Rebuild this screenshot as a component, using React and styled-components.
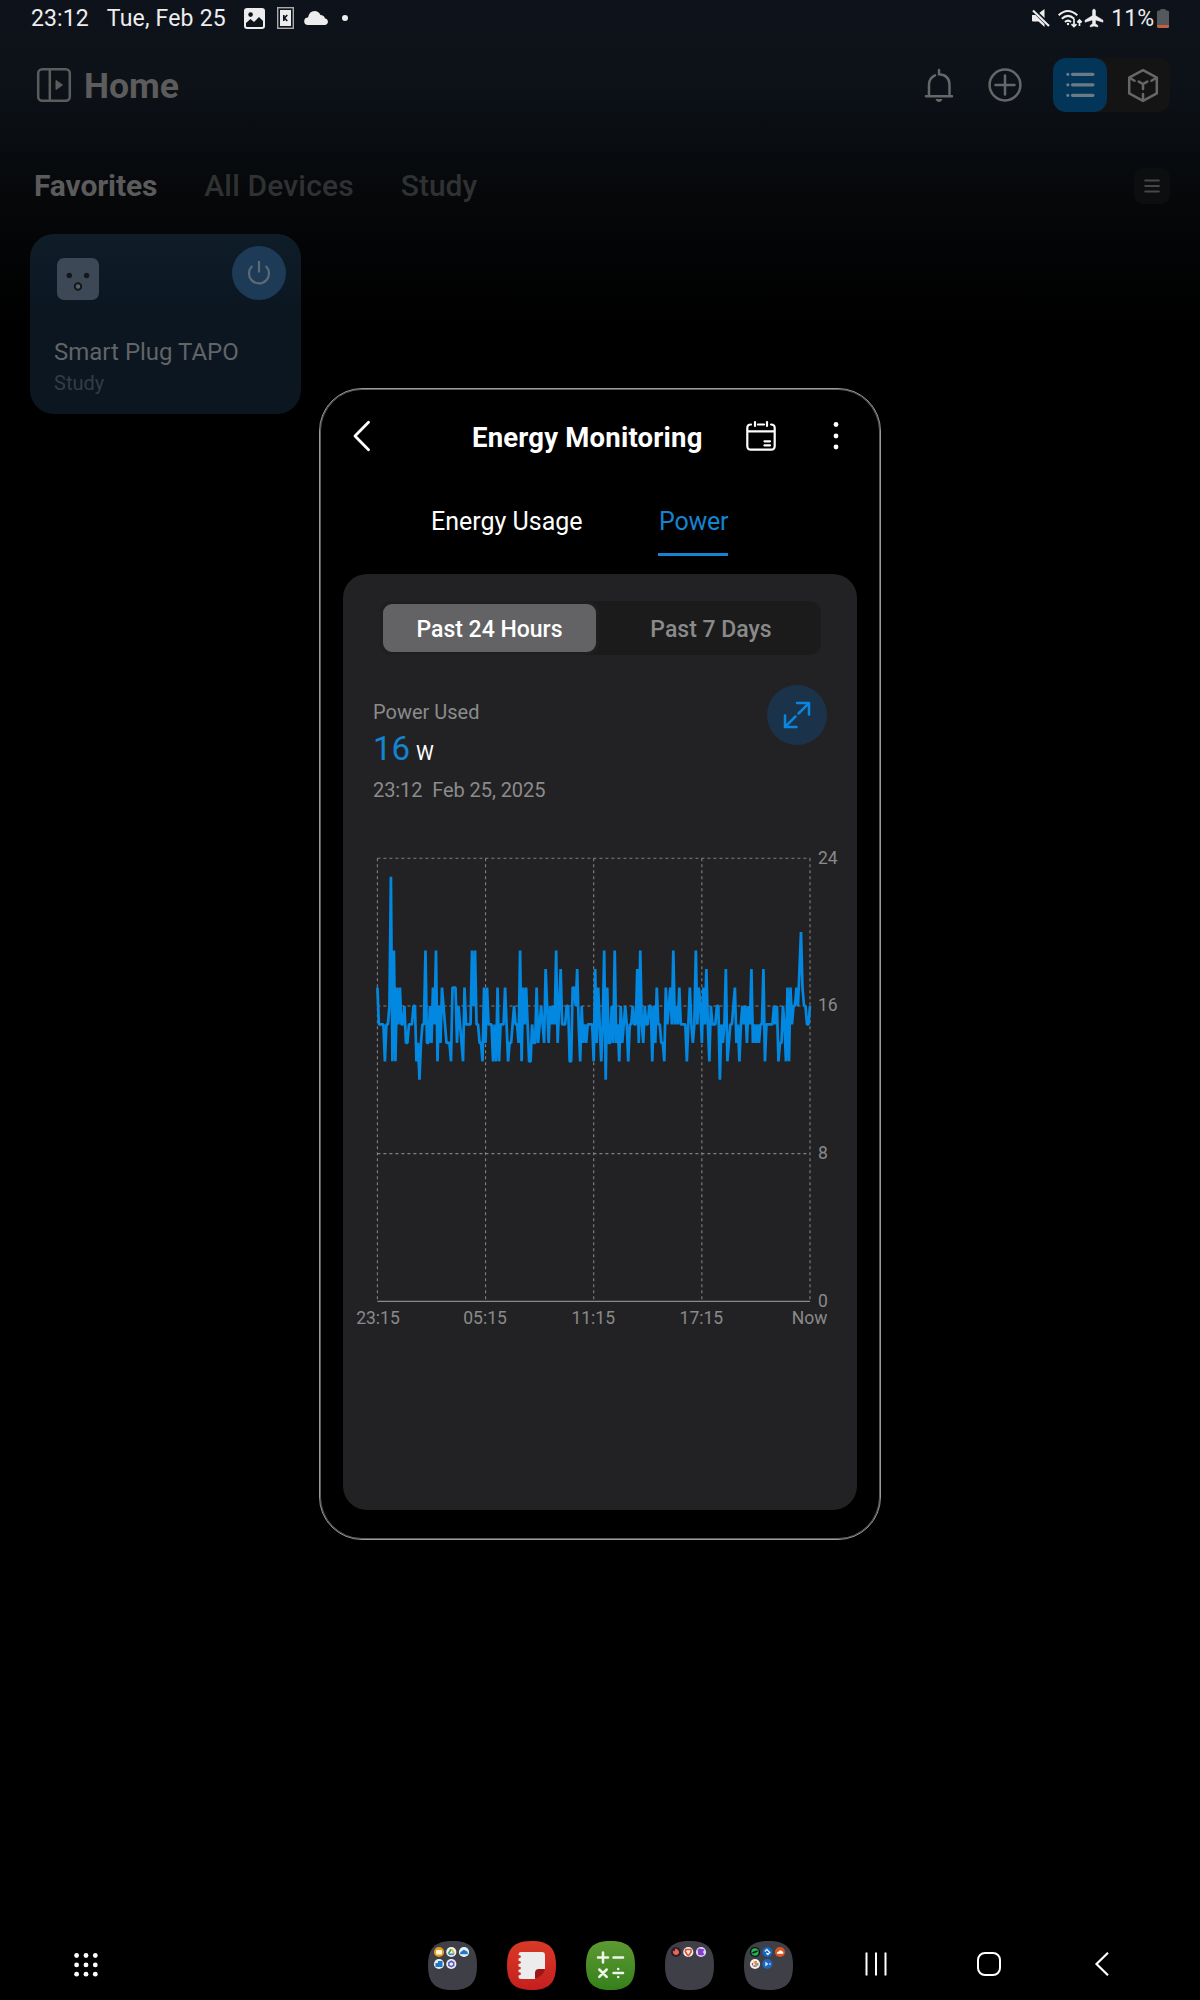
import React from 'react';
import styled, { createGlobalStyle } from 'styled-components';

const Global = createGlobalStyle`
  html, body { margin: 0; padding: 0; background: #000; }
  * { box-sizing: border-box; }
  body { font-family: Roboto, "Noto Sans", sans-serif; }
  svg { display: block; flex: none; overflow: visible; }
  button { font: inherit; border: 0; padding: 0; background: none; color: inherit; }
`;

const Screen = styled.div`
  position: relative;
  display: flex;
  flex-direction: column;
  width: 1200px;
  height: 2000px;
  overflow: hidden;
  white-space: nowrap;
  background: linear-gradient(180deg, #0e131b 0, #0d1219 85px, #0a0d11 135px, #050709 205px, #000 320px);
`;

const StatusBar = styled.div`
  display: flex;
  align-items: center;
  justify-content: space-between;
  height: 36px;
  padding: 0 31px;
  color: #ededee;
  font-size: 23px;
`;

const StatusGroup = styled.div`
  display: flex;
  align-items: center;
`;

const StatusText = styled.span`
  margin-right: ${(p) => p.$gap || 0}px;
  letter-spacing: ${(p) => p.$ls || 0}px;
`;

const IconSlot = styled.span`
  display: flex;
  margin-right: ${(p) => p.$gap || 0}px;
`;

const Header = styled.header`
  display: flex;
  align-items: center;
  justify-content: space-between;
  height: 98px;
  padding: 0 30px 0 37px;
  color: #5c5c5c;
`;

const HeaderGroup = styled.div`
  display: flex;
  align-items: center;
`;

const Title = styled.h1`
  margin: 0 0 0 13px;
  padding-top: 2px;
  font-size: 35.5px;
  font-weight: 700;
  letter-spacing: 0;
`;

const ViewSwitch = styled.div`
  display: flex;
  width: 117px;
  height: 54px;
  border-radius: 13px;
  background: #141414;
`;

const ViewButton = styled.button`
  display: grid;
  place-items: center;
  width: ${(p) => (p.$active ? 54 : 63)}px;
  padding-left: ${(p) => (p.$active ? 0 : 9)}px;
  border-radius: 13px;
  background: ${(p) => (p.$active ? '#023558' : 'transparent')};
`;

const RoomTabs = styled.nav`
  display: flex;
  align-items: center;
  height: 100px;
  padding: 4px 30px 0 34px;
  font-size: 30px;
`;

const RoomTab = styled.span`
  margin: -2px 47px 0 0;
  font-weight: ${(p) => (p.$active ? 700 : 500)};
  letter-spacing: ${(p) => p.$ls || 0}px;
  color: ${(p) => (p.$active ? '#5b5b5b' : '#303132')};
`;

const MenuButton = styled.button`
  display: grid;
  place-items: center;
  width: 36px;
  height: 36px;
  margin-left: auto;
  border-radius: 9px;
  background: #0c0e10;
`;

const DeviceCard = styled.section`
  width: 271px;
  height: 180px;
  margin-left: 30px;
  padding: 12px 15px 0 24px;
  border-radius: 24px;
  background: linear-gradient(180deg, #0f1d29 0, #0b1621 75px, #0b1621 100%);
`;

const DeviceTop = styled.div`
  display: flex;
  align-items: flex-end;
  justify-content: space-between;
  height: 54px;
  padding-left: 3px;
`;

const PowerButton = styled.button`
  display: grid;
  place-items: center;
  width: 54px;
  height: 54px;
  border-radius: 50%;
  background: #1d3b57;
`;

const DeviceName = styled.div`
  margin-top: 38px;
  font-size: 24px;
  line-height: 28px;
  color: #626466;
`;

const DeviceRoom = styled.div`
  margin-top: 5px;
  font-size: 20px;
  line-height: 24px;
  color: #333c44;
`;

const DialogLayer = styled.div`
  position: absolute;
  inset: 0 0 72px;
  display: flex;
  align-items: center;
  justify-content: center;
`;

const Dialog = styled.section`
  width: 562px;
  height: 1152px;
  border: 1px solid #999;
  border-radius: 43px;
  background: #000;
  box-shadow: inset 0 0 0 1px #5c5c5c;
`;

const DialogHeader = styled.header`
  display: flex;
  align-items: center;
  height: 94px;
  padding-left: 33px;
  color: #fff;
`;

const DialogTitle = styled.h2`
  width: 230px;
  margin: 0 44px 0 102px;
  padding-top: 3px;
  font-size: 27.5px;
  font-weight: 700;
  letter-spacing: 0.2px;
`;

const DialogTabs = styled.nav`
  display: flex;
  height: 91px;
  padding-left: 111px;
  align-items: flex-start;
  font-size: 25px;
`;

const DialogTab = styled.span`
  height: 73px;
  width: ${(p) => p.$w}px;
  margin-right: 74px;
  padding: 24px 0 0 ${(p) => (p.$active ? 1 : 0)}px;
  line-height: 30px;
  letter-spacing: ${(p) => p.$ls || 0}px;
  color: ${(p) => (p.$active ? '#1583d0' : '#fff')};
  border-bottom: 3px solid ${(p) => (p.$active ? '#1583d0' : 'transparent')};
`;

const Panel = styled.div`
  height: 936px;
  margin: 0 23px;
  padding-top: 27px;
  border-radius: 24px;
  background: #222224;
`;

const RangeSwitch = styled.div`
  display: flex;
  width: 441px;
  height: 54px;
  margin-left: 37px;
  border-radius: 12px;
  background: #1b1b1b;
  font-size: 23px;
  font-weight: 500;
`;

const RangeButton = styled.button`
  flex: ${(p) => (p.$active ? '0 0 219px' : '1')};
  padding: 3px 0 0 ${(p) => (p.$active ? 0 : 2)}px;
  border: 3px solid ${(p) => (p.$active ? '#1f1f20' : 'transparent')};
  border-radius: 12px;
  background: ${(p) => (p.$active ? '#636365' : 'transparent')};
  color: ${(p) => (p.$active ? '#fff' : '#8a8a8b')};
`;

const Reading = styled.div`
  display: flex;
  justify-content: space-between;
  height: 147px;
  padding: 30px 30px 0;
`;

const ReadingText = styled.div`
  padding-top: 15px;
  color: #8b8b8c;
  font-size: 20px;
  line-height: 24px;
`;

const ReadingValue = styled.div`
  display: flex;
  align-items: baseline;
  gap: 6px;
  height: 40px;
  margin: 5px 0 9px;
  font-size: 33px;
  line-height: 40px;
  color: #1583d0;
`;

const Unit = styled.span`
  font-size: 20px;
  color: #fff;
`;

const DateLine = styled.div`
  white-space: pre;
  letter-spacing: -0.07px;
`;

const ExpandButton = styled.button`
  display: grid;
  place-items: center;
  width: 60px;
  height: 60px;
  border-radius: 50%;
  background: #1b334a;
`;

const AxisText = styled.text`
  font: 17.5px Roboto, sans-serif;
  fill: #8a8a8b;
`;

const NavBar = styled.footer`
  display: flex;
  align-items: center;
  height: 72px;
  margin-top: auto;
  padding-left: 73px;
`;

const Dock = styled.div`
  display: flex;
  gap: 30px;
  margin: 3px 71.5px 0 329px;
`;

/* Power in watts, one sample per five minutes. */
const samples = [
  17,15,15,15,15,13,15,15,16,23,13,19,13,17,15,17,15,15,16,14,14,15,15,15,16,16,13,14,12,14,15,15,
  19,14,14,16,14,17,15,19,13,16,14,17,16,15,14,14,14,13,17,17,17,14,16,15,14,13,17,15,15,15,15,19,
  16,19,15,15,14,14,13,17,14,17,15,15,15,13,15,13,17,13,15,15,15,17,15,13,14,14,15,16,15,15,14,19,
  13,17,15,17,15,13,13,15,14,14,17,14,15,16,15,14,18,16,14,16,15,16,15,19,14,16,18,15,15,15,16,16,
  13,13,17,17,16,18,15,13,16,14,15,14,15,15,15,15,13,18,14,17,15,13,15,19,12,17,14,14,16,14,19,14,
  15,13,16,14,15,16,15,13,15,15,16,15,15,18,14,19,15,14,16,15,15,16,16,13,16,14,17,15,15,14,14,13,
  17,15,16,17,15,19,15,16,15,17,15,15,15,15,13,15,17,15,14,15,19,15,17,16,14,17,15,18,15,13,16,15,
  15,15,16,16,12,15,14,15,18,13,14,15,15,16,17,14,15,13,15,16,15,16,14,16,15,18,14,15,14,15,14,15,
  15,18,13,15,15,15,15,15,16,15,16,13,14,14,16,15,13,17,13,17,15,16,16,17,16,18,20,17,16,16,15,15,
  16,
];

const X0 = 34.4;
const X1 = 467;
const Y0 = 499.3;
const PER_WATT = 443 / 24;
const xTicks = ['23:15', '05:15', '11:15', '17:15', 'Now'];
const yTicks = [0, 8, 16, 24];

function PowerChart() {
  const xAt = (i, n) => X0 + ((X1 - X0) * i) / n;
  const yAt = (w) => Y0 - w * PER_WATT;
  const points = samples
    .map((w, i) => `${xAt(i, samples.length - 1).toFixed(2)},${yAt(w).toFixed(2)}`)
    .join(' ');
  return (
    <svg width="514" height="540" viewBox="0 0 514 540">
      <g stroke="#808081" strokeWidth="1.1" strokeDasharray="3 3">
        {xTicks.map((t, i) => (
          <line key={t} x1={xAt(i, 4)} x2={xAt(i, 4)} y1={yAt(24)} y2={Y0} />
        ))}
        {yTicks.slice(1).map((w) => (
          <line key={w} x1={X0} x2={X1} y1={yAt(w)} y2={yAt(w)} />
        ))}
      </g>
      <line x1={X0} x2={X1} y1={Y0} y2={Y0} stroke="#8a8a8b" strokeWidth="1.2" />
      <polyline points={points} fill="none" stroke="#0388e2" strokeWidth="2.7" strokeLinejoin="bevel" />
      {yTicks.map((w) => (
        <AxisText key={w} x="475" y={yAt(w) + 5.2}>{w}</AxisText>
      ))}
      {xTicks.map((t, i) => (
        <AxisText key={t} x={xAt(i, 4) + (i === 0 ? 0.6 : -0.5)} y={Y0 + 22.3} textAnchor="middle">{t}</AxisText>
      ))}
    </svg>
  );
}

const PictureIcon = () => (
  <svg width="21" height="21" viewBox="0 0 21 21">
    <rect width="21" height="21" rx="3" fill="#ededee" />
    <circle cx="6.6" cy="6.6" r="2.3" fill="#0e131c" />
    <path d="M2 18v-3l4.5-4 3.5 3 5-5 4 4v5q0 1-1 1H3q-1 0-1-1z" fill="#0e131c" />
  </svg>
);

const KIcon = () => (
  <svg width="17" height="22" viewBox="0 0 17 22">
    <rect x=".7" y=".7" width="15.6" height="20.6" fill="#0e131c" stroke="#a9abae" strokeWidth="1.4" />
    <rect x="3" y="3" width="11" height="16" fill="#ededee" />
    <path d="M6.8 8v6M10.3 8l-2.800 3 2.800 3" fill="none" stroke="#0e131c" strokeWidth="1.6" />
  </svg>
);

const CloudIcon = () => (
  <svg width="25" height="14" viewBox="0 0 25 14">
    <path d="M4 14a3.8 3.8 0 0 1 0-7.6Q5.500 0 10.500 0q4 0 6 4 3.500.2 4.400 3.200A3.500 3.500 0 0 1 21.500 14z" fill="#ededee" />
  </svg>
);

const MuteIcon = () => (
  <svg width="18" height="18" viewBox="0 0 18 18" fill="#ededee">
    <path d="M0 6h3.500L12.500 15v3L6.500 12.500H1Q0 12.500 0 11.500zM6.500 4.500L12.500 0v10z" />
    <path d="M1 1.500l16 15.500" stroke="#ededee" strokeWidth="2.200" />
    <path d="M3.500 1l13.500 13.200" stroke="#0e131c" strokeWidth="1.200" />
  </svg>
);

const WifiIcon = () => (
  <svg width="25" height="19" viewBox="0 0 25 19" fill="none" stroke="#ededee" strokeWidth="2">
    <path d="M.7 6.300q9-8.600 18.600 0M3.800 9.700q6.200-5.600 12.400 0M6.900 12.900q3.100-2.600 6.200 0" />
    <circle cx="10" cy="15" r="1.200" fill="#ededee" stroke="none" />
    <path d="M16 10v7.500m-2.500-2.400l2.500 2.500 2.500-2.500M21.500 17v-6m-2.200 2.400l2.200-2.400 2.200 2.400" strokeWidth="1.700" />
  </svg>
);

const PlaneIcon = () => (
  <svg width="18" height="18" viewBox="0 0 18 18">
    <path d="M9 0q1.500.4 1.500 2v4.600L18 11.200v2l-7.500-2.300v3.800l2.300 1.700V18L9 17l-3.800 1v-1.600l2.300-1.700v-3.800L0 13.200v-2l7.500-4.600V2Q7.500.4 9 0z" fill="#ededee" stroke="#ededee" strokeWidth=".5" />
  </svg>
);

const BatteryIcon = () => (
  <svg width="12" height="19" viewBox="0 0 12 19">
    <path d="M3 1.500Q3 0 4.500 0h3Q9 0 9 1.500h1.500q1.500 0 1.500 1.500v13H0V3q0-1.500 1.500-1.500z" fill="#55585d" />
    <path d="M0 16h12v1.500q0 1.500-1.500 1.500h-9Q0 19 0 17.500z" fill="#c5603f" />
  </svg>
);

const PanelIcon = () => (
  <svg width="34" height="34" viewBox="0 0 34 34" fill="none" stroke="#5c5c5c" strokeWidth="2.500">
    <rect x="1.200" y="1.200" width="31.600" height="31.600" rx="4" />
    <path d="M12.800 1v32" />
    <path d="M19 12.500l6.500 4.500-6.500 4.500z" fill="#5c5c5c" strokeWidth="1" strokeLinejoin="round" />
  </svg>
);

const BellIcon = () => (
  <svg width="28" height="33" viewBox="0 0 28 33" fill="none" stroke="#666768" strokeWidth="2.500" strokeLinecap="round">
    <path d="M10 6.300Q4 9 4 15.500V27M14 1v4.200Q24.500 6 24.500 16V27M1 27.300h26" />
    <path d="M10.500 30h7q-1 3-3.500 3t-3.500-3z" fill="#666768" stroke="none" />
  </svg>
);

const PlusIcon = () => (
  <svg width="34" height="34" viewBox="0 0 34 34" fill="none" stroke="#666768" strokeWidth="2.500" strokeLinecap="round">
    <circle cx="17" cy="17" r="15.400" />
    <path d="M17 7.500v19M7.500 17h19" />
  </svg>
);

const ListIcon = () => (
  <svg width="29" height="26" viewBox="0 0 29 26" stroke="#6a7a86" strokeWidth="3.200" strokeLinecap="round">
    {[2.300, 12.800, 23.300].map((y) => (
      <path key={y} d={`M1.800 ${y}h.1M6.500 ${y}h20.500`} />
    ))}
  </svg>
);

const CubeIcon = () => (
  <svg width="30" height="33" viewBox="0 0 30 33" fill="none" stroke="#666767" strokeWidth="2.500" strokeLinecap="round" strokeLinejoin="round">
    <path d="M15 1.200l13.800 7.400v15.800L15 31.900 1.200 24.400V8.600z" />
    <path d="M1.500 8.800l5 3M28.500 8.800l-5 3M15 20v-5l-4.300-2.400M15 15l4.300-2.400M15 25v6" />
  </svg>
);

const MenuIcon = () => (
  <svg width="16" height="14" viewBox="0 0 16 14" stroke="#454748" strokeWidth="2.200" strokeLinecap="round">
    <path d="M1.300 1.500h13.500M1.300 7h13.500M1.300 12.500h13.500" />
  </svg>
);

const PlugIcon = () => (
  <svg width="42" height="42" viewBox="0 0 42 42">
    <rect width="42" height="42" rx="7" fill="#3d4856" />
    <circle cx="12.300" cy="17.500" r="2.700" fill="#14181d" />
    <circle cx="29.600" cy="17.500" r="2.700" fill="#14181d" />
    <circle cx="21" cy="28.500" r="3.200" fill="#5c6166" stroke="#14181d" strokeWidth="2" />
  </svg>
);

const PowerIcon = () => (
  <svg width="24" height="26" viewBox="0 0 24 26" fill="none" stroke="#5e6973" strokeWidth="2.200">
    <path d="M12 1v11.500" />
    <path d="M5.300 6a10 10 0 1 0 13.400 0" />
  </svg>
);

const BackIcon = () => (
  <svg width="17" height="30" viewBox="0 0 17 30" fill="none" stroke="#fff" strokeWidth="2.800" strokeLinecap="round" strokeLinejoin="round">
    <path d="M15.500 1.300L2 15l13.500 13.700" />
  </svg>
);

const CalendarIcon = () => (
  <svg width="30" height="30" viewBox="0 0 30 30" fill="none" stroke="#fff" strokeWidth="2.200" strokeLinecap="round">
    <path d="M5 3.500Q1.300 3.500 1.300 7v18q0 3.700 3.700 3.700h20q3.700 0 3.700-3.700V7q0-3.500-3.700-3.500M9 1v4M21 1v4M12 3.500h6M1.300 10.300h27.400" />
    <path d="M18.500 20.300h5.500M18.500 24.400h5.500" />
  </svg>
);

const MoreIcon = () => (
  <svg width="6" height="30" viewBox="0 0 6 30" fill="#fff">
    <circle cx="3" cy="3.500" r="2.400" />
    <circle cx="3" cy="15" r="2.400" />
    <circle cx="3" cy="26" r="2.400" />
  </svg>
);

const ExpandIcon = () => (
  <svg width="28" height="28" viewBox="0 0 28 28" fill="none" stroke="#0a87dd" strokeWidth="2.500" strokeLinecap="round" strokeLinejoin="round">
    <path d="M14 2H26V13.500M25.700 2.300L15.500 12.500M2 14.500V26H13.500M2.300 25.700L12.500 15.500" />
  </svg>
);

const squircle = 'M24.500 0C42 0 49 7 49 24.500S42 49 24.500 49 0 42 0 24.500 7 0 24.500 0z';

const AppTile = ({ fill, children }) => (
  <svg width="49" height="49" viewBox="0 0 49 49">
    <defs>
      <linearGradient id="tileRed" x1="0" x2="0" y1="0" y2="1">
        <stop offset="0" stopColor="#d93a26" />
        <stop offset="1" stopColor="#c41f1f" />
      </linearGradient>
      <linearGradient id="tileGreen" x1="0" x2="0" y1="0" y2="1">
        <stop offset="0" stopColor="#5d9a33" />
        <stop offset="1" stopColor="#35801b" />
      </linearGradient>
    </defs>
    <path d={squircle} fill={fill} />
    {children}
  </svg>
);

const spots = [[11, 11], [23.300, 11], [36, 11], [11, 23], [23.300, 23]];

const Folder = ({ apps }) => (
  <AppTile fill="#3f3f47">
    {apps.map(([bg, glyph], i) => (
      <g key={i} transform={`translate(${spots[i][0]} ${spots[i][1]})`}>
        <circle r="5.100" fill={bg} />
        {glyph}
      </g>
    ))}
  </AppTile>
);

const folderOne = [
  ['#e39a1f', <rect x="-3" y="-2" width="6" height="4.500" rx="1" fill="#fff3d8" />],
  ['#eef3f5', <g fill="none" strokeWidth="1.700"><path d="M-.3-2.800L-3 1.800" stroke="#2fa35a" /><path d="M.3-2.800L3 1.800" stroke="#e8b526" /><path d="M-2.500 2.300h5" stroke="#3d7ee0" /></g>],
  ['#e9f2f8', <path d="M-3.800 2.200q-.4-2.700 1.800-2.900Q-.5-3.500 1.600-1.200q2.600.3 2.200 3.400z" fill="#1f7ac4" />],
  ['#e6eff6', <path d="M-1-3h4.500v6H-1zM-3.500-1H0v4h-3.500z" fill="#2277bd" />],
  ['#eeeef6', <path d="M0-2.700L2.400-1.300v2.700L0 2.700-2.400 1.400v-2.700z" fill="none" stroke="#5b5fc0" strokeWidth="1.600" />],
];

const folderTwo = [
  ['#2d1b3c', <path d="M-3-1.500l1.500 1L-.5-3.500Q3.500-2 3 1 1.800 3.300-.5 3-3.500 2-3-1.500z" fill="#ee6a3a" />],
  ['#f6eeea', <path d="M-2.500-2.500h5L3-.5 1.500 2 0 3.500-1.500 2-3-.5z" fill="none" stroke="#d9512c" strokeWidth="1.600" />],
  ['#e3d2f7', <path d="M-3.300-2.500L-1.500-3.600 3.500-2.500 1.900 0l1.500 2.500-2 1-4.200-.6z" fill="#8340c8" />],
];

const folderThree = [
  ['#08140d', <g><circle r="3.700" fill="#23b35b" /><path d="M-2.500 1L2.500-1" stroke="#08140d" strokeWidth="1.400" /></g>],
  ['#1565c2', <path d="M-2.500-.5l2-2 3 3-2 2-1.500-1.500" fill="none" stroke="#e8f1fb" strokeWidth="1.300" />],
  ['#d9571e', <path d="M-3 1.800Q-3.500-.2-1-.4 0-2.600 1.700-1q2.200.6 1.600 2.800z" fill="#fff" />],
  ['#f2f0ea', <g strokeWidth="1.200"><path d="M-2.500-1v2.500" stroke="#d9453a" /><path d="M-.8-3v3" stroke="#e9a72c" /><path d="M-.8 1v2" stroke="#3f78d8" /><path d="M1-3v6" stroke="#c9433a" /><path d="M2.800-1v2.500" stroke="#36a055" /></g>],
  ['#1f66bd', <path d="M-2-2.500L1.200 0-2 2.500zM2-.7h1.300v1.400H2z" fill="#cfe5fa" />],
];

const NotesTile = () => (
  <AppTile fill="url(#tileRed)">
    <path d="M14 11h21q3 0 3 3v14l-10 10H14q-2.500 0-2.500-2.500v-1q2.500-.3 2.500-1.700t-2.500-1.700v-2.300q2.500-.3 2.500-1.700t-2.500-1.700v-2.300q2.500-.3 2.500-1.700t-2.500-1.700v-2.300q2.500-.3 2.500-1.700t-2.500-1.700Q11.500 11 14 11z" fill="#ececec" />
    <path d="M28 38v-6q0-4 4-4h6q-1 6-10 10z" fill="#9c1616" />
  </AppTile>
);

const CalculatorTile = () => (
  <AppTile fill="url(#tileGreen)">
    <g stroke="#f0f5ec" strokeWidth="2.500" strokeLinecap="round">
      <path d="M12 16.500h10M17 11.500v10M27.500 16.500h9.500M13.300 28.500l7.400 7.400M20.700 28.500l-7.400 7.400M27.500 32h9.500M32.200 28v.1M32.200 36v.1" />
    </g>
  </AppTile>
);

const AppsIcon = () => (
  <svg width="26" height="26" viewBox="0 0 26 26" fill="#fff">
    {[4.500, 13.900, 23.200].map((y) => [3.600, 13, 22.300].map((x) => <circle key={`${x}-${y}`} cx={x} cy={y} r="2.400" />))}
  </svg>
);

const RecentsIcon = () => (
  <svg width="22" height="24" viewBox="0 0 22 24" stroke="#fff" strokeWidth="2">
    <path d="M1.500.5v23M11 .5v23M20.500.5v23" />
  </svg>
);

const HomeIcon = () => (
  <svg width="24" height="24" viewBox="0 0 24 24" fill="none" stroke="#fff" strokeWidth="2">
    <rect x="1" y="1" width="22" height="22" rx="7" />
  </svg>
);

const NavBackIcon = () => (
  <svg width="14" height="24" viewBox="0 0 14 24" fill="none" stroke="#fff" strokeWidth="2.200">
    <path d="M13 .7L1.500 12 13 23.300" />
  </svg>
);

export default function App() {
  return (
    <Screen>
      <Global />
      <StatusBar>
        <StatusGroup>
          <StatusText $gap={18} $ls={0.1}>23:12</StatusText>
          <StatusText $gap={18} $ls={0.2}>Tue, Feb 25</StatusText>
          <IconSlot $gap={12}><PictureIcon /></IconSlot>
          <IconSlot $gap={10}><KIcon /></IconSlot>
          <IconSlot $gap={13}><CloudIcon /></IconSlot>
          <svg width="6" height="6" viewBox="0 0 6 6"><circle cx="3" cy="3" r="3" fill="#ededee" /></svg>
        </StatusGroup>
        <StatusGroup>
          <IconSlot $gap={8}><MuteIcon /></IconSlot>
          <IconSlot $gap={2}><WifiIcon /></IconSlot>
          <IconSlot $gap={8}><PlaneIcon /></IconSlot>
          <StatusText $gap={3}>11%</StatusText>
          <BatteryIcon />
        </StatusGroup>
      </StatusBar>

      <Header>
        <HeaderGroup>
          <PanelIcon />
          <Title>Home</Title>
        </HeaderGroup>
        <HeaderGroup>
          <IconSlot $gap={35}><BellIcon /></IconSlot>
          <IconSlot $gap={31}><PlusIcon /></IconSlot>
          <ViewSwitch>
            <ViewButton $active><ListIcon /></ViewButton>
            <ViewButton><CubeIcon /></ViewButton>
          </ViewSwitch>
        </HeaderGroup>
      </Header>

      <RoomTabs>
        <RoomTab $active $ls={-0.12}>Favorites</RoomTab>
        <RoomTab $ls={0.15}>All Devices</RoomTab>
        <RoomTab>Study</RoomTab>
        <MenuButton><MenuIcon /></MenuButton>
      </RoomTabs>

      <DeviceCard>
        <DeviceTop>
          <PlugIcon />
          <PowerButton><PowerIcon /></PowerButton>
        </DeviceTop>
        <DeviceName>Smart Plug TAPO</DeviceName>
        <DeviceRoom>Study</DeviceRoom>
      </DeviceCard>

      <DialogLayer>
        <Dialog>
          <DialogHeader>
            <IconSlot><BackIcon /></IconSlot>
            <DialogTitle>Energy Monitoring</DialogTitle>
            <IconSlot $gap={57}><CalendarIcon /></IconSlot>
            <MoreIcon />
          </DialogHeader>
          <DialogTabs>
            <DialogTab $w={153}>Energy Usage</DialogTab>
            <DialogTab $active $w={70} $ls={-0.2}>Power</DialogTab>
          </DialogTabs>
          <Panel>
            <RangeSwitch>
              <RangeButton $active>Past 24 Hours</RangeButton>
              <RangeButton>Past 7 Days</RangeButton>
            </RangeSwitch>
            <Reading>
              <ReadingText>
                <div>Power Used</div>
                <ReadingValue>16<Unit>W</Unit></ReadingValue>
                <DateLine>{'23:12  Feb 25, 2025'}</DateLine>
              </ReadingText>
              <ExpandButton><ExpandIcon /></ExpandButton>
            </Reading>
            <PowerChart />
          </Panel>
        </Dialog>
      </DialogLayer>

      <NavBar>
        <AppsIcon />
        <Dock>
          <Folder apps={folderOne} />
          <NotesTile />
          <CalculatorTile />
          <Folder apps={folderTwo} />
          <Folder apps={folderThree} />
        </Dock>
        <IconSlot $gap={90}><RecentsIcon /></IconSlot>
        <IconSlot $gap={94}><HomeIcon /></IconSlot>
        <NavBackIcon />
      </NavBar>
    </Screen>
  );
}
